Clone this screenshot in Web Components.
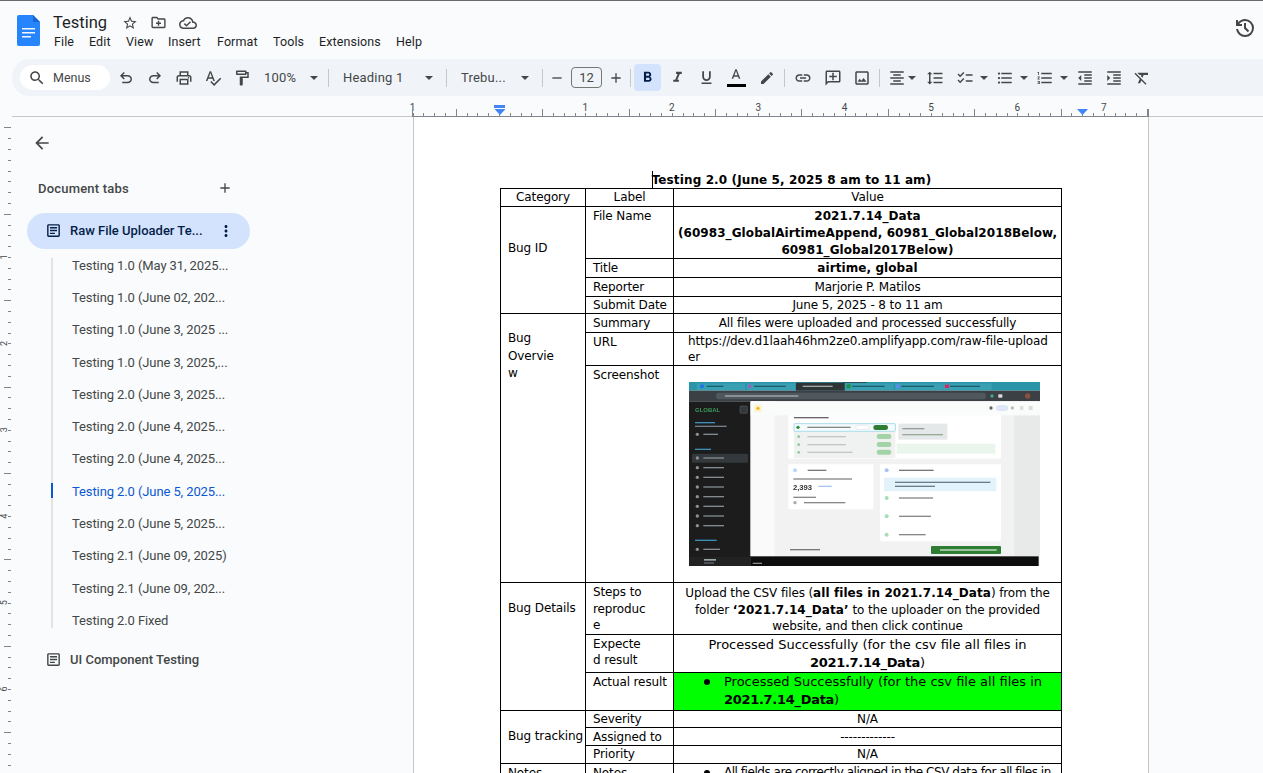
<!DOCTYPE html>
<html>
<head>
<meta charset="utf-8">
<title>Testing</title>
<style>
html,body{margin:0;padding:0;height:100%;overflow:hidden;background:#f9fbfd;}
</style>
</head>
<body>
<docs-app>
  <docs-header slot="header"></docs-header>
  <docs-toolbar slot="toolbar"></docs-toolbar>
  <docs-ruler slot="ruler"></docs-ruler>
  <docs-vruler slot="vruler"></docs-vruler>
  <docs-sidebar slot="sidebar">
    <tab-item kind="root" active>Raw File Uploader Te...</tab-item>
    <tab-item>Testing 1.0 (May 31, 2025...</tab-item>
    <tab-item>Testing 1.0 (June 02, 202...</tab-item>
    <tab-item>Testing 1.0 (June 3, 2025 ...</tab-item>
    <tab-item>Testing 1.0 (June 3, 2025,...</tab-item>
    <tab-item>Testing 2.0 (June 3, 2025...</tab-item>
    <tab-item>Testing 2.0 (June 4, 2025...</tab-item>
    <tab-item>Testing 2.0 (June 4, 2025...</tab-item>
    <tab-item current>Testing 2.0 (June 5, 2025...</tab-item>
    <tab-item>Testing 2.0 (June 5, 2025...</tab-item>
    <tab-item>Testing 2.1 (June 09, 2025)</tab-item>
    <tab-item>Testing 2.1 (June 09, 202...</tab-item>
    <tab-item>Testing 2.0 Fixed</tab-item>
    <tab-item kind="root">UI Component Testing</tab-item>
  </docs-sidebar>
  <docs-page slot="page"></docs-page>
</docs-app>

<script>
const ICONS = {
  star:'M22 9.24l-7.19-.62L12 2 9.19 8.63 2 9.24l5.46 4.73L5.82 21 12 17.27 18.18 21l-1.63-7.03L22 9.24zM12 15.4l-3.76 2.27 1-4.28-3.32-2.88 4.38-.38L12 6.1l1.71 4.04 4.38.38-3.32 2.88 1 4.28L12 15.4z',
  move:'M20 6h-8l-2-2H4c-1.1 0-2 .9-2 2v12c0 1.1.9 2 2 2h16c1.1 0 2-.9 2-2V8c0-1.1-.9-2-2-2zm0 12H4V6h5.17l2 2H20v10zM13 9.5h-2v2.5H8.5v2H11v2.5h2V14h2.5v-2H13z',
  cloud:'M19.35 10.04C18.67 6.59 15.64 4 12 4 9.11 4 6.6 5.64 5.35 8.04 2.34 8.36 0 10.91 0 14c0 3.31 2.69 6 6 6h13c2.76 0 5-2.24 5-5 0-2.64-2.05-4.78-4.65-4.96zM19 18H6c-2.21 0-4-1.79-4-4 0-2.05 1.53-3.76 3.56-3.97l1.07-.11.5-.95C8.08 7.14 9.94 6 12 6c2.62 0 4.88 1.86 5.39 4.43l.3 1.5 1.53.11c1.56.1 2.78 1.41 2.78 2.96 0 1.65-1.35 3-3 3zm-9-3.82l-2.09-2.09L6.5 13.5 10 17l6.01-6.01-1.41-1.41z',
  history:'M12 21q-3.45 0-6.012-2.287T3.05 13H5.1q.35 2.6 2.313 4.3T12 19q2.925 0 4.963-2.037T19 12t-2.037-4.962T12 5q-1.725 0-3.225.8T6.25 8H9v2H3V4h2v2.35q1.275-1.6 3.113-2.475T12 3q3.75 0 6.375 2.625T21 12t-2.625 6.375T12 21m2.8-4.8L11 12.4V7h2v4.6l3.2 3.2z',
  search:'M15.5 14h-.79l-.28-.27C15.41 12.59 16 11.11 16 9.5 16 5.91 13.09 3 9.5 3S3 5.91 3 9.5 5.91 16 9.5 16c1.61 0 3.09-.59 4.23-1.57l.27.28v.79l5 4.99L20.49 19l-4.99-5zm-6 0C7.01 14 5 11.99 5 9.5S7.01 5 9.5 5 14 7.01 14 9.5 11.99 14 9.5 14z',
  undo:'M7 19v-2h7.1q1.575 0 2.737-1T18 13.5q0-1.5-1.163-2.5T14.1 10H7.8l2.6 2.6L9 14 4 9l5-5 1.4 1.4L7.8 8h6.3q2.425 0 4.163 1.575T20 13.5t-1.737 3.925T14.1 19z',
  redo:'M9.9 19q-2.425 0-4.163-1.575T4 13.5t1.737-3.925T9.9 8h6.3l-2.6-2.6L15 4l5 5-5 5-1.4-1.4 2.6-2.6H9.9q-1.575 0-2.737 1T6 13.5t1.163 2.5T9.9 17H17v2z',
  print:'M19 8h-1V3H6v5H5c-1.66 0-3 1.34-3 3v6h4v4h12v-4h4v-6c0-1.66-1.34-3-3-3zM8 5h8v3H8V5zm8 14H8v-4h8v4zm2-2v-4H6v4H4v-6c0-.55.45-1 1-1h14c.55 0 1 .45 1 1v6h-2zM18 10.5a1 1 0 1 0 0 2 1 1 0 0 0 0-2z',
  spell:'M12.45 16h2.09L9.43 3H7.57L2.46 16h2.09l1.12-3h5.64l1.14 3zm-6.02-5L8.5 5.48 10.57 11H6.43zm15.16.59l-8.09 8.09L9.83 16l-1.41 1.41 5.09 5.09L23 13l-1.41-1.41z',
  paint:'M18 4V3c0-.55-.45-1-1-1H5c-.55 0-1 .45-1 1v4c0 .55.45 1 1 1h12c.55 0 1-.45 1-1V6h1v4H9v11c0 .55.45 1 1 1h2c.55 0 1-.45 1-1v-9h8V4h-3zm-2 2H6V4h10v2zm-5 14v-8h0v8z',
  minus:'M19 13H5v-2h14v2z',
  plus:'M19 13h-6v6h-2v-6H5v-2h6V5h2v6h6v2z',
  bold:'M15.6 10.79c.97-.67 1.65-1.77 1.65-2.79 0-2.26-1.75-4-4-4H7v14h7.04c2.09 0 3.71-1.7 3.71-3.79 0-1.52-.86-2.82-2.15-3.42zM10 6.5h3c.83 0 1.5.67 1.5 1.5s-.67 1.5-1.5 1.5h-3v-3zm3.5 9H10v-3h3.5c.83 0 1.5.67 1.5 1.5s-.67 1.5-1.5 1.5z',
  italic:'M10 4v3h2.21l-3.42 8H6v3h8v-3h-2.21l3.42-8H18V4z',
  underline:'M12 17c3.31 0 6-2.69 6-6V3h-2.5v8c0 1.93-1.57 3.5-3.5 3.5S8.5 12.93 8.5 11V3H6v8c0 3.31 2.69 6 6 6zm-7 2v2h14v-2H5z',
  color:'M11 2L5.5 16h2.25l1.12-3h6.25l1.12 3h2.25L13 2h-2zm-1.38 9L12 4.67 14.38 11H9.62z',
  pen:'M3 17.25V21h3.75L17.81 9.94l-3.75-3.75L3 17.25zM20.71 7.04a1 1 0 0 0 0-1.41l-2.34-2.34a1 1 0 0 0-1.41 0l-1.83 1.83 3.75 3.75 1.83-1.83z',
  link:'M3.9 12c0-1.71 1.39-3.1 3.1-3.1h4V7H7c-2.76 0-5 2.24-5 5s2.24 5 5 5h4v-1.9H7c-1.71 0-3.1-1.39-3.1-3.1zM8 13h8v-2H8v2zm9-6h-4v1.9h4c1.71 0 3.1 1.39 3.1 3.1s-1.39 3.1-3.1 3.1h-4V17h4c2.76 0 5-2.24 5-5s-2.24-5-5-5z',
  comment:'M2.01 4c0-1.1.89-2 1.99-2h16c1.1 0 2 .9 2 2v12c0 1.1-.9 2-2 2H6l-4 4 .01-18zM4 4v13.17L5.17 16H20V4H4zM11 5h2v4h4v2h-4v4h-2v-4H7V9h4z',
  image:'M19 5v14H5V5h14m0-2H5c-1.1 0-2 .9-2 2v14c0 1.1.9 2 2 2h14c1.1 0 2-.9 2-2V5c0-1.1-.9-2-2-2zm-4.86 8.86l-3 3.87L9 13.14 6 17h12l-3.86-5.14z',
  align:'M7 15v2h10v-2H7zm-4 6h18v-2H3v2zm0-8h18v-2H3v2zm4-6v2h10V7H7zM3 3v2h18V3H3z',
  spacing:'M6 7h2.5L5 3.5 1.5 7H4v10H1.5L5 20.5 8.5 17H6V7zm4-2v2h12V5H10zm0 14h12v-2H10v2zm0-6h12v-2H10v2z',
  check:'M22 7h-9v2h9V7zm0 8h-9v2h9v-2zM5.54 11L2 7.46l1.41-1.41 2.12 2.12 4.24-4.24 1.41 1.41L5.54 11zm0 8L2 15.46l1.41-1.41 2.12 2.12 4.24-4.24 1.41 1.41L5.54 19z',
  bullets:'M4 10.5c-.83 0-1.5.67-1.5 1.5s.67 1.5 1.5 1.5 1.5-.67 1.5-1.5-.67-1.5-1.5-1.5zm0-6c-.83 0-1.5.67-1.5 1.5S3.17 7.5 4 7.5 5.5 6.83 5.5 6 4.83 4.5 4 4.5zm0 12c-.83 0-1.5.68-1.5 1.5s.68 1.5 1.5 1.5 1.5-.68 1.5-1.5-.67-1.5-1.5-1.5zM7 19h14v-2H7v2zm0-6h14v-2H7v2zm0-8v2h14V5H7z',
  numbers:'M2 17h2v.5H3v1h1v.5H2v1h3v-4H2v1zm1-9h1V4H2v1h1v3zm-1 3h1.8L2 13.1v.9h3v-1H3.2L5 10.9V10H2v1zm5-6v2h14V5H7zm0 14h14v-2H7v2zm0-6h14v-2H7v2z',
  outdent:'M11 17h10v-2H11v2zm-8-5l4 4V8l-4 4zm0 9h18v-2H3v2zM3 3v2h18V3H3zm8 6h10V7H11v2zm0 4h10v-2H11v2z',
  indent:'M3 21h18v-2H3v2zM3 8v8l4-4-4-4zm8 9h10v-2H11v2zM3 3v2h18V3H3zm8 6h10V7H11v2zm0 4h10v-2H11v2z',
  clear:'M3.27 5L2 6.27l6.97 6.97L6.5 19h3l1.57-3.66L16.73 21 18 19.73 3.27 5zM6 5v.18L8.82 8h2.4l-.72 1.68 2.1 2.1L14.21 8H20V5H6z',
  back:'M20 11H7.83l5.59-5.59L12 4l-8 8 8 8 1.41-1.41L7.83 13H20v-2z',
  more:'M12 8c1.1 0 2-.9 2-2s-.9-2-2-2-2 .9-2 2 .9 2 2 2zm0 2c-1.1 0-2 .9-2 2s.9 2 2 2 2-.9 2-2-.9-2-2-2zm0 6c-1.1 0-2 .9-2 2s.9 2 2 2 2-.9 2-2-.9-2-2-2z',
  doc:'M19 5v14H5V5h14m0-2H5c-1.1 0-2 .9-2 2v14c0 1.1.9 2 2 2h14c1.1 0 2-.9 2-2V5c0-1.1-.9-2-2-2zM14 17H7v-2h7v2zm3-4H7v-2h10v2zm0-4H7V7h10v2z'
};

customElements.define('doc-icon', class extends HTMLElement {
  constructor(){
    super();
    this.attachShadow({mode:'open'});
  }
  connectedCallback(){
    const s = this.getAttribute('size') || 18;
    const c = this.getAttribute('color') || 'currentColor';
    this.shadowRoot.innerHTML = `
      <style>:host{display:inline-flex;line-height:0;color:#444746;}</style>
      <svg width="${s}" height="${s}" viewBox="0 0 24 24" fill="${c}"><path d="${ICONS[this.getAttribute('name')]}"/></svg>`;
  }
});

// small dropdown triangle
customElements.define('tb-caret', class extends HTMLElement {
  constructor(){
    super();
    this.attachShadow({mode:'open'}).innerHTML = `
      <style>:host{display:inline-block;width:0;height:0;border-left:4px solid transparent;border-right:4px solid transparent;border-top:4px solid #444746;flex:none;}</style>`;
  }
});

customElements.define('tb-btn', class extends HTMLElement {
  constructor(){
    super();
    this.attachShadow({mode:'open'}).innerHTML = `
      <style>
      :host{display:flex;align-items:center;justify-content:center;height:27px;flex:none;color:#444746;border-radius:4px;}
      :host([on]){background:#d3e3fd;color:#041e49;}
      </style>
      <slot></slot>`;
  }
  connectedCallback(){
    this.style.width = (this.getAttribute('w') || 29) + 'px';
  }
});

customElements.define('tb-drop', class extends HTMLElement {
  constructor(){
    super();
    this.attachShadow({mode:'open'}).innerHTML = `
      <style>
      :host{display:flex;align-items:center;justify-content:space-between;flex:none;height:27px;box-sizing:border-box;font:13px Roboto,sans-serif;color:#444746;letter-spacing:.2px;}
      </style>
      <slot></slot><tb-caret></tb-caret>`;
  }
  connectedCallback(){
    this.style.width = this.getAttribute('w') + 'px';
    this.style.marginLeft = (this.getAttribute('ml') || 0) + 'px';
    this.style.marginRight = (this.getAttribute('mr') || 0) + 'px';
  }
});

customElements.define('tb-sep', class extends HTMLElement {
  constructor(){
    super();
    this.attachShadow({mode:'open'}).innerHTML = `
      <style>:host{display:block;width:1px;height:18px;background:#c7c7c7;flex:none;}</style>`;
  }
});

customElements.define('docs-header', class extends HTMLElement {
  constructor(){
    super();
    this.attachShadow({mode:'open'}).innerHTML = `
      <style>
      :host{display:flex;height:59px;box-sizing:border-box;border-top:1px solid #6a6a6a;padding:14px 0 0 17px;font-family:Roboto,sans-serif;}
      .logo{width:23px;height:31px;flex:none;}
      .col{margin-left:13px;display:flex;flex-direction:column;}
      .top{display:flex;align-items:center;height:15px;}
      .name{font-size:16.5px;color:#1f1f1f;line-height:15px;width:69px;}
      .top doc-icon{margin-right:12px;}
      nav{display:flex;margin-top:4px;padding-left:1px;font-size:12.5px;color:#1f1f1f;line-height:16px;letter-spacing:.1px;}
      nav span{display:block;}
      .hist{margin:1px 6px 0 auto;}
      </style>
      <svg class="logo" viewBox="0 0 23 31"><path d="M2 0h14l7 7v22a2 2 0 0 1-2 2H2a2 2 0 0 1-2-2V2a2 2 0 0 1 2-2z" fill="#2684fc"/><path d="M16 0l7 7h-7z" fill="#1a66d6"/><path d="M5 13h13v1.6H5zM5 17h13v1.6H5zM5 21h9v1.6H5z" fill="#f1f6ff"/></svg>
      <div class="col">
        <div class="top"><div class="name">Testing</div>
          <doc-icon name="star" size="16"></doc-icon><doc-icon name="move" size="17"></doc-icon><doc-icon name="cloud" size="18"></doc-icon></div>
        <nav>
          <span style="width:35px">File</span><span style="width:37px">Edit</span><span style="width:42px">View</span><span style="width:49px">Insert</span><span style="width:56px">Format</span><span style="width:46px">Tools</span><span style="width:77px">Extensions</span><span>Help</span>
        </nav>
      </div>
      <doc-icon class="hist" name="history" size="24"></doc-icon>`;
  }
});

customElements.define('docs-toolbar', class extends HTMLElement {
  constructor(){
    super();
    this.attachShadow({mode:'open'}).innerHTML = `
      <style>
      :host{display:flex;align-items:center;height:37px;margin-left:12px;padding-left:8px;background:#f0f4f9;border-radius:18px 0 0 18px;}
      .search{display:flex;align-items:center;width:90px;height:25px;box-sizing:border-box;padding-left:8px;background:#fff;border-radius:13px;flex:none;font:12.5px Roboto,sans-serif;color:#444746;}
      .search span{margin-left:7px;}
      .size{width:31px;height:21px;box-sizing:border-box;border:1px solid #747775;border-radius:4px;display:flex;align-items:center;justify-content:center;font:13px Roboto,sans-serif;color:#444746;flex:none;}
      .u{display:flex;flex-direction:column;align-items:center;}
      .bar{width:19px;height:3px;background:#000;}
      </style>
      <div class="search"><doc-icon name="search" size="18"></doc-icon><span>Menus</span></div>
      <tb-btn style="margin-left:1px"><doc-icon name="undo"></doc-icon></tb-btn>
      <tb-btn><doc-icon name="redo"></doc-icon></tb-btn>
      <tb-btn><doc-icon name="print"></doc-icon></tb-btn>
      <tb-btn><doc-icon name="spell"></doc-icon></tb-btn>
      <tb-btn><doc-icon name="paint"></doc-icon></tb-btn>
      <tb-drop w="54" ml="8" mr="10">100%</tb-drop>
      <tb-sep></tb-sep>
      <tb-drop w="90" ml="14" mr="13">Heading 1</tb-drop>
      <tb-sep></tb-sep>
      <tb-drop w="68" ml="14" mr="13">Trebu...</tb-drop>
      <tb-sep></tb-sep>
      <tb-btn w="28"><doc-icon name="minus" size="16"></doc-icon></tb-btn>
      <div class="size">12</div>
      <tb-btn w="27"><doc-icon name="plus" size="16"></doc-icon></tb-btn>
      <tb-sep style="margin:0 3px 0 1px"></tb-sep>
      <tb-btn w="27" on><doc-icon name="bold" size="17" style="color:#041e49"></doc-icon></tb-btn>
      <tb-btn w="32"><doc-icon name="italic" size="17"></doc-icon></tb-btn>
      <tb-btn w="26"><doc-icon name="underline" size="17"></doc-icon></tb-btn>
      <tb-btn w="34"><div class="u"><doc-icon name="color" size="16"></doc-icon><div class="bar"></div></div></tb-btn>
      <tb-btn w="28"><doc-icon name="pen" size="16"></doc-icon></tb-btn>
      <tb-sep style="margin:0 3px"></tb-sep>
      <tb-btn w="29"><doc-icon name="link"></doc-icon></tb-btn>
      <tb-btn w="32"><doc-icon name="comment"></doc-icon></tb-btn>
      <tb-btn w="26"><doc-icon name="image"></doc-icon></tb-btn>
      <tb-sep style="margin:0 6px 0 4px"></tb-sep>
      <tb-btn w="22"><doc-icon name="align"></doc-icon></tb-btn>
      <tb-caret></tb-caret>
      <tb-btn w="30" style="margin-left:4px"><doc-icon name="spacing"></doc-icon></tb-btn>
      <tb-btn w="20" style="margin-left:5px"><doc-icon name="check"></doc-icon></tb-btn>
      <tb-caret style="margin-left:5px"></tb-caret>
      <tb-btn w="22" style="margin-left:6px"><doc-icon name="bullets"></doc-icon></tb-btn>
      <tb-caret style="margin-left:4px"></tb-caret>
      <tb-btn w="22" style="margin-left:6px"><doc-icon name="numbers"></doc-icon></tb-btn>
      <tb-caret style="margin-left:4px"></tb-caret>
      <tb-btn w="28" style="margin-left:3px"><doc-icon name="outdent"></doc-icon></tb-btn>
      <tb-btn w="28" style="margin-left:1px"><doc-icon name="indent"></doc-icon></tb-btn>
      <tb-btn w="28"><doc-icon name="clear"></doc-icon></tb-btn>`;
  }
});

// ruler ticks are a drawing, positions are computed from the inch width
const INCH = 86.4;
customElements.define('docs-ruler', class extends HTMLElement {
  constructor(){
    super();
    let t = '';
    for(let i = -8; i < 70; i++){
      const x = 499 + i * INCH / 8;
      if(x < 412 || x > 1149) continue;
      const inch = i % 8 === 0, half = i % 4 === 0 && !inch;
      const y = half ? 109 : 113;
      t += `<line x1="${Math.round(x)+.5}" x2="${Math.round(x)+.5}" y1="${y-96}" y2="21" stroke="#80868b"/>`;
      if(inch && i !== 0) t += `<text x="${x}" y="15" text-anchor="middle">${Math.abs(i/8)}</text>`;
    }
    t += `<line x1="412.5" x2="412.5" y1="13" y2="21" stroke="#80868b"/><line x1="1148.5" x2="1148.5" y1="13" y2="21" stroke="#80868b"/>`;
    this.attachShadow({mode:'open'}).innerHTML = `
      <style>
      :host{display:block;height:21px;}
      svg{display:block;}
      text{font:10px Roboto,sans-serif;fill:#444746;}
      </style>
      <svg width="1263" height="21">
        <rect x="12" y="20" width="1251" height="1" fill="#c7c7c7"/>
        <rect x="413" y="20" width="735" height="1" fill="#80868b"/>
        ${t}
        <rect x="494" y="9" width="11" height="3" fill="#4285f4"/>
        <path d="M494.5 13h11l-5.5 6z" fill="#4285f4"/>
        <path d="M1077 13h11l-5.5 6z" fill="#4285f4"/>
      </svg>`;
  }
});

customElements.define('docs-vruler', class extends HTMLElement {
  constructor(){
    super();
    let t = '';
    for(let i = -16; i < 60; i++){
      const y = 257 + i * INCH / 8 - 117;
      if(y < 0 || y > 656) continue;
      const inch = i % 8 === 0, half = i % 4 === 0 && !inch;
      t += `<line x1="${half ? 4 : 8}" x2="11" y1="${Math.round(y)+.5}" y2="${Math.round(y)+.5}" stroke="#80868b"/>`;
      if(inch && i >= 0) t += `<text transform="translate(6.5 ${y}) rotate(-90)" text-anchor="middle">${i/8+1}</text>`;
    }
    this.attachShadow({mode:'open'}).innerHTML = `
      <style>
      :host{display:block;width:12px;flex:none;}
      svg{display:block;}
      text{font:9px Roboto,sans-serif;fill:#444746;}
      </style>
      <svg width="12" height="656">${t}</svg>`;
  }
});

customElements.define('tab-item', class extends HTMLElement {
  constructor(){
    super();
    this.attachShadow({mode:'open'}).innerHTML = `
      <style>
      :host{display:flex;align-items:center;height:32.3px;padding-left:60px;font:13px Roboto,sans-serif;color:#444746;white-space:nowrap;letter-spacing:-.1px;position:relative;}
      :host([current]){color:#0b57d0;}
      :host([current])::before{content:"";position:absolute;left:39px;top:8px;width:2px;height:15px;background:#0b57d0;}
      :host([kind=root]){height:36px;margin-left:15px;width:223px;padding:0 0 1px 18px;box-sizing:border-box;color:#444746;font-weight:500;border-radius:18px;letter-spacing:0;}
      :host([active]){background:#d3e3fd;color:#041e49;}
      .more{position:absolute;right:15px;top:9px;}
      </style>
      <span id="ic"></span><slot></slot><span id="more"></span>`;
  }
  connectedCallback(){
    if(this.getAttribute('kind') === 'root'){
      const col = this.hasAttribute('active') ? '#041e49' : '#444746';
      this.shadowRoot.getElementById('ic').innerHTML = `<doc-icon name="doc" size="17" color="${col}" style="margin-right:8px;display:flex"></doc-icon>`;
      if(this.hasAttribute('active')) this.shadowRoot.getElementById('more').innerHTML = `<doc-icon class="more" name="more" size="18" color="#041e49"></doc-icon>`;
    }
  }
});

customElements.define('docs-sidebar', class extends HTMLElement {
  constructor(){
    super();
    this.attachShadow({mode:'open'}).innerHTML = `
      <style>
      :host{display:block;width:401px;flex:none;box-sizing:border-box;padding-top:16px;}
      .back{display:flex;margin-left:20px;height:20px;}
      .head{display:flex;align-items:center;justify-content:space-between;width:195px;margin:25px 0 0 26px;height:20px;font:500 13px Roboto,sans-serif;color:#444746;letter-spacing:.2px;}
      .list{margin-top:15px;position:relative;}
      .rail{position:absolute;left:39px;top:45px;width:2px;height:370px;background:#e3e3e3;}
      ::slotted(tab-item[kind=root]:last-child){margin-top:5.5px;}
      </style>
      <doc-icon class="back" name="back" size="20"></doc-icon>
      <div class="head"><span>Document tabs</span><doc-icon name="plus" size="16"></doc-icon></div>
      <div class="list"><div class="rail"></div><slot></slot></div>`;
  }
});

customElements.define('shot-preview', class extends HTMLElement {
  constructor(){
    super();
    let rows = '';
    [250,279,308,337,366,395,424,453].forEach(y => {
      rows += `<circle cx="52" cy="${y}" r="5" fill="#8b9194"/><rect x="70" y="${y-2}" width="62" height="4" fill="#858b8e"/>`;
    });
    this.attachShadow({mode:'open'}).innerHTML = `
      <style>:host{display:block;width:351px;height:184px;line-height:0;}</style>
      <svg width="351" height="184" viewBox="27 22 1053 552">
      <defs><filter id="b" x="-2%" y="-2%" width="104%" height="104%"><feGaussianBlur stdDeviation="1.6"/></filter></defs>
      <g filter="url(#b)">
      <rect x="27" y="22" width="1053" height="552" fill="#f4f6f8"/>
      <rect x="27" y="22" width="1053" height="26" fill="#2a94a8"/>
      <rect x="50" y="26" width="145" height="20" fill="#39a0b2"/><circle cx="66" cy="35" r="6" fill="#1a73e8"/><rect x="80" y="33" width="50" height="4" fill="#1d5f6e"/>
      <rect x="200" y="26" width="145" height="20" fill="#39a0b2"/><rect x="205" y="30" width="8" height="10" fill="#b44fc0"/><rect x="222" y="33" width="95" height="4" fill="#1d5f6e"/>
      <rect x="348" y="24" width="146" height="24" fill="#2d3436"/><rect x="368" y="33" width="90" height="4" fill="#a0a6a8"/>
      <rect x="490" y="16" width="70" height="8" fill="#333"/>
      <rect x="496" y="26" width="145" height="20" fill="#39a0b2"/><rect x="500" y="29" width="12" height="12" fill="#1e8e3e"/><rect x="516" y="33" width="98" height="4" fill="#1d5f6e"/>
      <rect x="645" y="26" width="145" height="20" fill="#39a0b2"/><rect x="648" y="29" width="10" height="12" fill="#5b8def"/><rect x="664" y="33" width="98" height="4" fill="#1d5f6e"/>
      <rect x="790" y="26" width="145" height="20" fill="#39a0b2"/><rect x="795" y="30" width="12" height="10" fill="#e0245e"/><rect x="810" y="33" width="90" height="4" fill="#1d5f6e"/>
      <rect x="27" y="48" width="1053" height="32" fill="#3a4145"/>
      <rect x="108" y="54" width="810" height="20" rx="10" fill="#50585c"/><rect x="135" y="62" width="220" height="4" fill="#a8aeb1"/>
      <circle cx="936" cy="64" r="5" fill="#3fa98a"/><rect x="955" y="59" width="12" height="10" fill="#ddd"/><circle cx="1043" cy="64" r="8" fill="#8a5040"/>
      <rect x="27" y="80" width="185" height="494" fill="#1a1c1e"/>
      <rect x="212" y="80" width="868" height="464" fill="#f2f2f3"/>
      <rect x="212" y="80" width="72" height="464" fill="#fafafa"/>
      <rect x="1003" y="122" width="77" height="422" fill="#e8e9e9"/>
      <rect x="212" y="80" width="868" height="42" fill="#fafbfb"/>
      <rect x="222" y="90" width="24" height="22" fill="#fff3d0"/><circle cx="234" cy="101" r="5" fill="#f2b82b"/>
      <circle cx="933" cy="100" r="5" fill="#666"/><rect x="950" y="93" width="33" height="14" rx="7" fill="#dfe8f8" stroke="#a9c0e8"/><circle cx="997" cy="100" r="5" fill="#bbb"/><rect x="1020" y="94" width="10" height="12" fill="#ddd"/><rect x="1046" y="94" width="12" height="12" fill="#ddd"/>
      <text x="45" y="112" font-size="18" font-family="Liberation Sans" font-weight="700" fill="#3f9a5a">GLOBAL</text>
      <rect x="180" y="94" width="22" height="22" rx="3" fill="#33383a" stroke="#888"/>
      <rect x="45" y="142" width="60" height="4" fill="#3d8fb8"/><rect x="45" y="153" width="95" height="4" fill="#76808a"/>
      <circle cx="52" cy="179" r="5" fill="#8b9194"/><rect x="70" y="177" width="44" height="4" fill="#858b8e"/>
      <rect x="45" y="222" width="48" height="4" fill="#3d8fb8"/>
      <rect x="36" y="237" width="168" height="27" rx="3" fill="#33373a"/>
      ${rows}
      <rect x="45" y="495" width="65" height="4" fill="#3d8fb8"/>
      <circle cx="52" cy="524" r="5" fill="#8b9194"/><rect x="70" y="522" width="50" height="4" fill="#858b8e"/>
      <rect x="27" y="545" width="185" height="29" fill="#222"/><rect x="72" y="553" width="36" height="5" fill="#9aa"/><rect x="72" y="563" width="30" height="4" fill="#667"/>
      <rect x="212" y="545" width="864" height="29" fill="#0c0c0c"/><rect x="218" y="564" width="28" height="4" fill="#888"/>
      <rect x="325" y="122" width="638" height="130" rx="4" fill="#fff"/>
      <rect x="342" y="127" width="104" height="4" fill="#666"/>
      <rect x="342" y="147" width="304" height="23" rx="2" fill="#f5fbfd" stroke="#7ccbe0" stroke-width="2"/>
      <circle cx="354" cy="158" r="5" fill="#2f8f46"/><rect x="382" y="156" width="130" height="4" fill="#888"/>
      <rect x="527" y="152" width="40" height="12" rx="6" fill="#fff" stroke="#ccc"/>
      <rect x="580" y="151" width="44" height="15" rx="7" fill="#2e7d32"/>
      <rect x="342" y="172" width="304" height="78" fill="#f0f1f1"/>
      <circle cx="356" cy="186" r="4" fill="#8fc69a"/><rect x="382" y="184" width="116" height="4" fill="#c3c6c6"/><rect x="590" y="178" width="44" height="15" rx="7" fill="#a5d3a8"/>
      <circle cx="356" cy="210" r="4" fill="#8fc69a"/><rect x="382" y="208" width="116" height="4" fill="#c3c6c6"/><rect x="590" y="202" width="44" height="15" rx="7" fill="#a5d3a8"/>
      <circle cx="356" cy="233" r="4" fill="#8fc69a"/><rect x="382" y="231" width="136" height="4" fill="#c3c6c6"/><rect x="590" y="225" width="44" height="15" rx="7" fill="#a5d3a8"/>
      <rect x="655" y="147" width="147" height="48" fill="#e5e8e9"/>
      <rect x="667" y="160" width="66" height="4" fill="#999"/><rect x="667" y="178" width="122" height="4" fill="#9a9"/>
      <rect x="650" y="207" width="296" height="30" fill="#eaf6ec"/>
      <rect x="325" y="269" width="255" height="135" rx="3" fill="#fff"/>
      <rect x="600" y="269" width="363" height="231" rx="3" fill="#fff"/>
      <circle cx="345" cy="287" r="6" fill="#bcd6f5"/><rect x="383" y="285" width="56" height="4" fill="#777"/>
      <rect x="340" y="311" width="176" height="4" fill="#888"/>
      <text x="339" y="345" font-size="23" font-family="Liberation Sans" font-weight="700" fill="#333">2,393</text>
      <rect x="415" y="333" width="40" height="4" fill="#a9c8ee"/>
      <rect x="340" y="366" width="68" height="4" fill="#888"/>
      <circle cx="345" cy="384" r="5" fill="#aaa"/><rect x="372" y="382" width="124" height="4" fill="#888"/>
      <circle cx="620" cy="287" r="6" fill="#a9c4f0"/><rect x="657" y="285" width="104" height="4" fill="#777"/>
      <rect x="612" y="309" width="337" height="41" rx="3" fill="#e3f3fb"/>
      <rect x="645" y="321" width="286" height="4" fill="#6a7f8c"/><rect x="645" y="333" width="120" height="4" fill="#6a7f8c"/>
      <circle cx="620" cy="370" r="6" fill="#a8dcb4"/><rect x="657" y="368" width="102" height="4" fill="#888"/>
      <circle cx="620" cy="425" r="6" fill="#a8dcb4"/><rect x="657" y="423" width="96" height="4" fill="#888"/>
      <circle cx="620" cy="480" r="6" fill="#a8dcb4"/><rect x="657" y="478" width="80" height="4" fill="#888"/>
      <rect x="330" y="523" width="90" height="4" fill="#777"/>
      <rect x="753" y="514" width="210" height="24" rx="3" fill="#2e7d32"/><rect x="780" y="524" width="170" height="4" fill="#cfe5d0"/>
      </g>
      </svg>`;
  }
});

customElements.define('docs-page', class extends HTMLElement {
  constructor(){
    super();
    this.attachShadow({mode:'open'}).innerHTML = `
      <style>
      :host{display:block;width:736px;flex:none;box-sizing:border-box;background:#fff;border-left:1px solid #c7c7c7;border-right:1px solid #c7c7c7;padding:57px 65px 0 86px;height:656px;overflow:hidden;font-family:"DejaVu Sans",sans-serif;font-size:12px;letter-spacing:-.12px;color:#000;}
      h1{margin:0;font-size:12px;font-weight:700;line-height:13px;letter-spacing:.12px;text-align:center;}
      h1 i{display:inline-block;width:1px;height:17px;margin-top:-3px;background:#000;vertical-align:top;margin-right:-1px;}
      table{border-collapse:collapse;table-layout:fixed;width:561px;line-height:16.5px;}
      td{border:1px solid #000;padding:1px 0 0 7px;vertical-align:top;white-space:nowrap;}
      b{letter-spacing:.08px;}
      .c{text-align:center;padding:0;}
      .m{text-align:center;padding:1px 2px 0;}
      tr.h td{line-height:16.5px;}
      .big{font-size:13px;letter-spacing:0;line-height:17.5px;}
      .big b{letter-spacing:-.3px;}
      .li{display:flex;padding-left:30px;}
      .li::before{content:"";width:6px;height:6px;border-radius:50%;background:#000;margin:6px 14px 0 0;flex:none;}
      .shot{padding:16px 0 0 15px;}
      </style>
      <h1><i></i>Testing 2.0 (June 5, 2025 8 am to 11 am)</h1>
      <table>
        <colgroup><col style="width:85px"><col style="width:88px"><col style="width:388px"></colgroup>
        <tr class="h" style="height:18px"><td class="c">Category</td><td class="c">Label</td><td class="c">Value</td></tr>
        <tr style="height:52px"><td rowspan="4" style="vertical-align:middle;padding-bottom:25px">Bug ID</td><td>File Name</td><td class="m" style="line-height:16.8px"><b>2021.7.14_Data<br>(60983_GlobalAirtimeAppend, 60981_Global2018Below,<br>60981_Global2017Below)</b></td></tr>
        <tr style="height:19px"><td>Title</td><td class="m"><b>airtime, global</b></td></tr>
        <tr style="height:19px"><td>Reporter</td><td class="m">Marjorie P. Matilos</td></tr>
        <tr style="height:17px"><td style="line-height:15px">Submit Date</td><td class="m" style="line-height:15px">June 5, 2025 - 8 to 11 am</td></tr>
        <tr style="height:19px"><td rowspan="3" style="padding-top:16px;line-height:17.5px">Bug<br>Overvie<br>w</td><td>Summary</td><td class="m">All files were uploaded and processed successfully</td></tr>
        <tr style="height:33px"><td>URL</td><td style="padding:0 0 0 14px;line-height:16px">https://dev.d1laah46hm2ze0.amplifyapp.com/raw-file-upload<br>er</td></tr>
        <tr style="height:217px"><td>Screenshot</td><td class="shot"><shot-preview></shot-preview></td></tr>
        <tr style="height:52px"><td rowspan="3" style="padding-top:17px">Bug Details</td><td>Steps to<br>reproduc<br>e</td><td class="m" style="padding-top:2px;line-height:16.2px">Upload the CSV files (<b>all files in 2021.7.14_Data</b>) from the<br>folder <b>‘2021.7.14_Data’</b> to the uploader on the provided<br>website, and then click continue</td></tr>
        <tr style="height:38px"><td style="line-height:15.5px;padding-top:2px">Expecte<br>d result</td><td class="m big">Processed Successfully (for the csv file all files in<br><b>2021.7.14_Data</b>)</td></tr>
        <tr style="height:38px"><td>Actual result</td><td class="big" style="background:#00ff00;padding:0"><div class="li"><div>Processed Successfully (for the csv file all files in<br><b>2021.7.14_Data</b>)</div></div></td></tr>
        <tr style="height:17px"><td rowspan="3" style="vertical-align:middle;padding-bottom:3px">Bug tracking</td><td style="line-height:15px">Severity</td><td class="m" style="line-height:15px">N/A</td></tr>
        <tr style="height:18px"><td style="line-height:16px">Assigned to</td><td class="m" style="line-height:16px">-------------</td></tr>
        <tr style="height:18px"><td style="line-height:15px">Priority</td><td class="m" style="line-height:15px">N/A</td></tr>
        <tr><td>Notes</td><td>Notes</td><td style="padding:0;letter-spacing:-.46px"><div class="li"><div>All fields are correctly aligned in the CSV data for all files in</div></div></td></tr>
      </table>`;
  }
});

customElements.define('docs-app', class extends HTMLElement {
  constructor(){
    super();
    this.attachShadow({mode:'open'}).innerHTML = `
      <style>
      :host{display:block;width:1263px;height:773px;overflow:hidden;background:#f9fbfd;}
      .body{display:flex;height:656px;}
      </style>
      <slot name="header"></slot>
      <slot name="toolbar"></slot>
      <slot name="ruler"></slot>
      <div class="body"><slot name="vruler"></slot><slot name="sidebar"></slot><slot name="page"></slot></div>`;
  }
});
</script>
</body>
</html>
